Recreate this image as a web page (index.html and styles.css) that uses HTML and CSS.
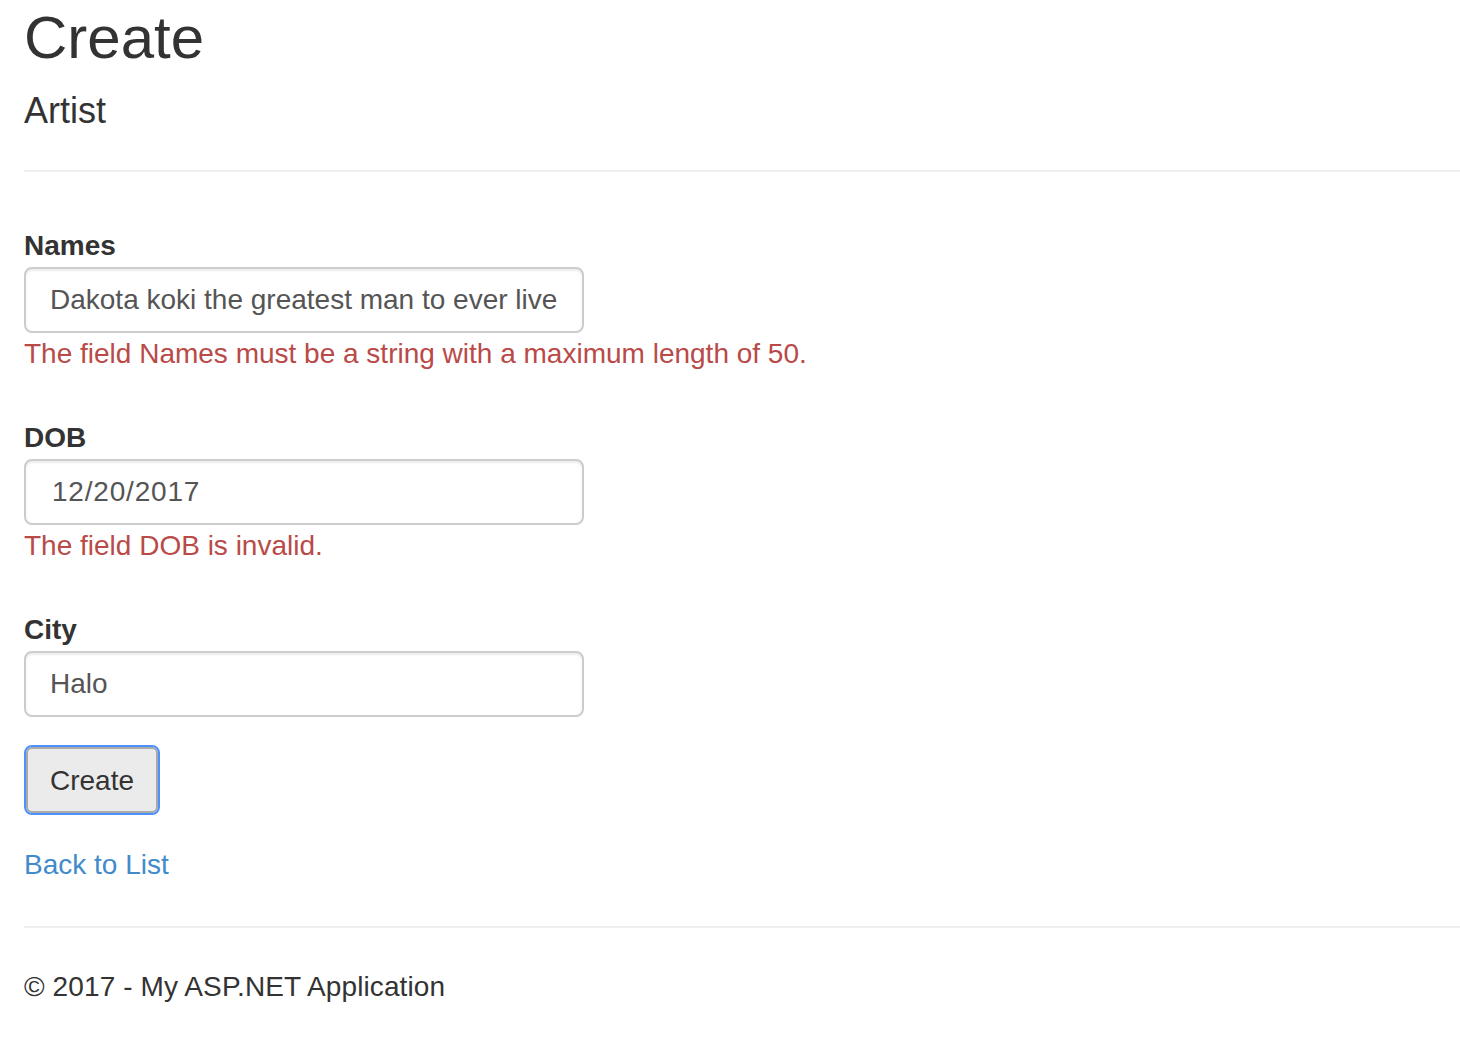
FILE: index.html
```html
<!DOCTYPE html>
<html lang="en">
<head>
<meta charset="utf-8">
<title>Create - My ASP.NET Application</title>
<link rel="stylesheet" href="styles.css">
</head>
<body>
<div class="page">
  <h2 class="title">Create</h2>
  <form class="create-form" onsubmit="return false">
    <h4 class="subtitle">Artist</h4>
    <hr class="rule rule-top">
    <div class="fields">
      <div class="form-group">
        <label class="control-label" for="Names">Names</label>
        <input class="form-control" id="Names" type="text" value="Dakota koki the greatest man to ever live">
        <span class="field-error">The field Names must be a string with a maximum length of 50.</span>
      </div>
      <div class="form-group">
        <label class="control-label" for="DOB">DOB</label>
        <input class="form-control form-control-date" id="DOB" type="text" value="12/20/2017">
        <span class="field-error">The field DOB is invalid.</span>
      </div>
      <div class="form-group">
        <label class="control-label" for="City">City</label>
        <input class="form-control" id="City" type="text" value="Halo">
      </div>
      <button class="btn" type="submit">Create</button>
    </div>
  </form>
  <div class="back"><a class="link" href="#">Back to List</a></div>
  <hr class="rule rule-bottom">
  <footer class="footer"><p>© 2017 - My ASP.NET Application</p></footer>
</div>
</body>
</html>
```
FILE: styles.css
```css
html, body {
  margin: 0;
  padding: 0;
  background: #fff;
}
body {
  font-family: "Liberation Sans", Arial, Helvetica, sans-serif;
  font-size: 28px;
  line-height: 40px;
  color: #333;
}
.page {
  padding-left: 24px;
}
.title {
  font-size: 60px;
  line-height: 66px;
  font-weight: normal;
  margin: 5px 0 20px;
  color: #333;
}
.create-form {
  margin: 0;
}
.subtitle {
  font-size: 36px;
  line-height: 40px;
  font-weight: normal;
  margin: 0;
  color: #333;
}
.rule {
  border: 0;
  border-top: 2px solid #eee;
  height: 0;
  margin: 0;
}
.rule-top {
  margin-top: 39px;
}
.fields {
  padding-top: 40px;
}
.form-group {
  padding-top: 14px;
  margin-bottom: 30px;
}
.control-label {
  display: block;
  font-weight: bold;
  line-height: 40px;
  margin-bottom: 1px;
}
.form-control {
  display: block;
  box-sizing: border-box;
  width: 560px;
  height: 66px;
  padding: 0 24px;
  margin: 0;
  font-family: inherit;
  font-size: 28px;
  color: #555;
  background: #fff;
  border: 2px solid #ccc;
  border-radius: 8px;
  box-shadow: inset 0 2px 2px rgba(0, 0, 0, 0.075);
  outline: none;
}
.form-control-date {
  padding-left: 26px;
  letter-spacing: 0.8px;
}
.field-error {
  display: block;
  color: #b94a48;
  line-height: 40px;
  margin-top: 1px;
}
.btn {
  display: block;
  box-sizing: border-box;
  margin: 4px 0 0 2px;
  height: 66px;
  padding: 11px 22px 10px;
  font-family: inherit;
  font-size: 28px;
  line-height: 40px;
  color: #333;
  background: #ebebeb;
  border: 2px solid #aaa;
  border-radius: 6px;
  outline: 2px solid #4d90fe;
  outline-offset: 0;
  cursor: pointer;
}
.back {
  margin-top: 32px;
  line-height: 40px;
}
.link {
  color: #428bca;
  text-decoration: none;
}
.rule-bottom {
  margin-top: 41px;
}
.footer p {
  margin: 39px 0 0;
  line-height: 40px;
  letter-spacing: 0.1px;
}
```
